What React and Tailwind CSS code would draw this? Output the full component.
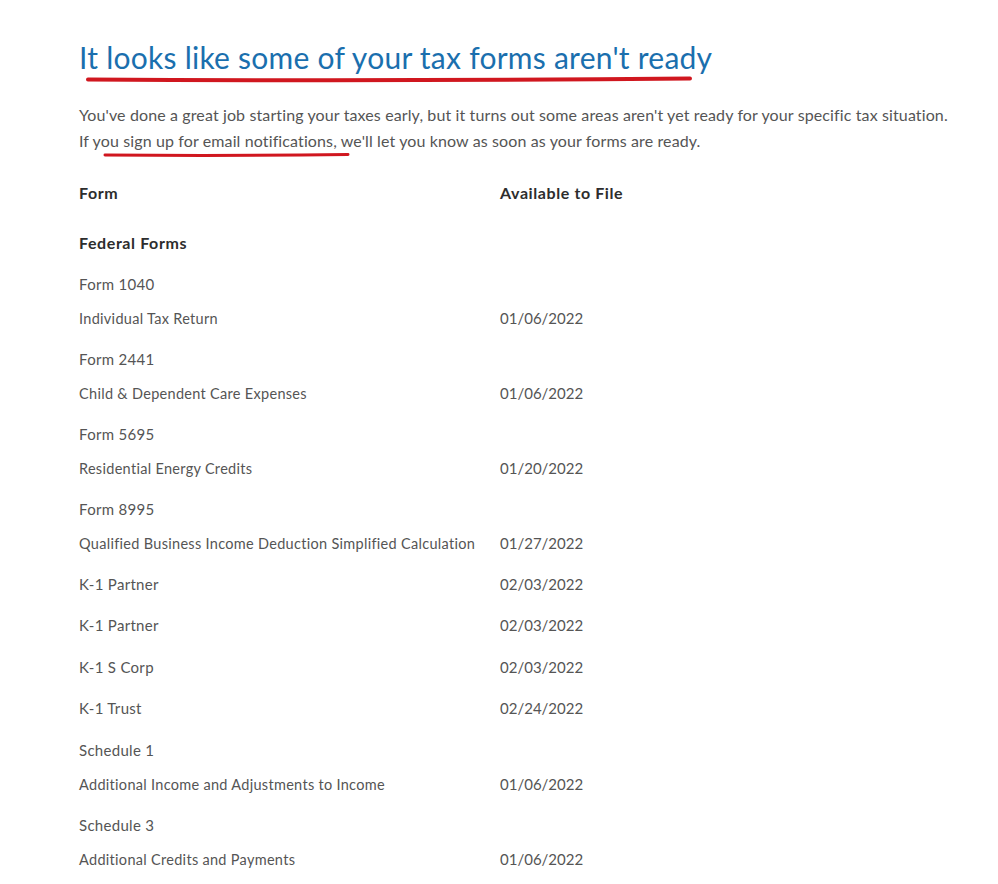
import React from "react";

const rows = [
  { t: "title", name: "Form 1040" },
  { t: "detail", name: "Individual Tax Return", date: "01/06/2022" },
  { t: "title", name: "Form 2441" },
  { t: "detail", name: "Child & Dependent Care Expenses", date: "01/06/2022" },
  { t: "title", name: "Form 5695" },
  { t: "detail", name: "Residential Energy Credits", date: "01/20/2022" },
  { t: "title", name: "Form 8995" },
  { t: "detail", name: "Qualified Business Income Deduction Simplified Calculation", date: "01/27/2022" },
  { t: "single", name: "K-1 Partner", date: "02/03/2022" },
  { t: "single", name: "K-1 Partner", date: "02/03/2022" },
  { t: "single", name: "K-1 S Corp", date: "02/03/2022" },
  { t: "single", name: "K-1 Trust", date: "02/24/2022" },
  { t: "title", name: "Schedule 1" },
  { t: "detail", name: "Additional Income and Adjustments to Income", date: "01/06/2022" },
  { t: "title", name: "Schedule 3" },
  { t: "detail", name: "Additional Credits and Payments", date: "01/06/2022" },
];

export default function App() {
  return (
    <div className="min-h-screen bg-white text-[#5a5a5a]" style={{ fontFamily: "Lato, 'Noto Sans', sans-serif" }}>
      <div className="relative pl-[79px] pt-[36px]">
        <h1 className="text-[30px] leading-[42px] tracking-[0.25px] text-[#1a6fae] font-normal">
          It looks like some of your tax forms aren't ready
        </h1>
        <p className="mt-[24px] text-[16px] leading-[26px] tracking-[0.12px] text-[#555] whitespace-nowrap">
          You've done a great job starting your taxes early, but it turns out some areas aren't yet ready for your specific tax situation.
          <br />
          If you sign up for email notifications, we'll let you know as soon as your forms are ready.
        </p>

        <svg className="absolute left-[85px] top-[75px]" width="610" height="9" viewBox="0 0 610 9">
          <path d="M3 4.5 Q 305 6.5 605 3.5" stroke="#d0171f" strokeWidth="4" strokeLinecap="round" fill="none" />
        </svg>
        <svg className="absolute left-[103px] top-[151px]" width="248" height="8" viewBox="0 0 248 8">
          <path d="M2 4 Q 124 5 245 3.5" stroke="#d0171f" strokeWidth="3" strokeLinecap="round" fill="none" />
        </svg>

        <div className="mt-[22px] grid grid-cols-[421px_1fr] h-[34px] items-center text-[16px] tracking-[0.6px] font-bold text-[#2d2d2d]">
          <div>Form</div>
          <div>Available to File</div>
        </div>
        <div className="mt-[16px] h-[41px] pb-[7px] flex items-center text-[16px] tracking-[0.6px] font-bold text-[#2d2d2d]">
          Federal Forms
        </div>

        {rows.map((r, i) =>
          r.t === "title" ? (
            <div key={i} className="h-[34px] flex items-center text-[15px] tracking-[0.3px] text-[#555]">
              {r.name}
            </div>
          ) : r.t === "detail" ? (
            <div key={i} className="h-[41px] pb-[6px] grid grid-cols-[421px_1fr] items-center">
              <div className="text-[14.5px] tracking-[0.3px] text-[#555] whitespace-nowrap">{r.name}</div>
              <div className="text-[15px] text-[#555]">{r.date}</div>
            </div>
          ) : (
            <div key={i} className="h-[41.5px] pb-[7.5px] grid grid-cols-[421px_1fr] items-center">
              <div className="text-[15px] tracking-[0.3px] text-[#555]">{r.name}</div>
              <div className="text-[15px] text-[#555]">{r.date}</div>
            </div>
          )
        )}
      </div>
    </div>
  );
}
